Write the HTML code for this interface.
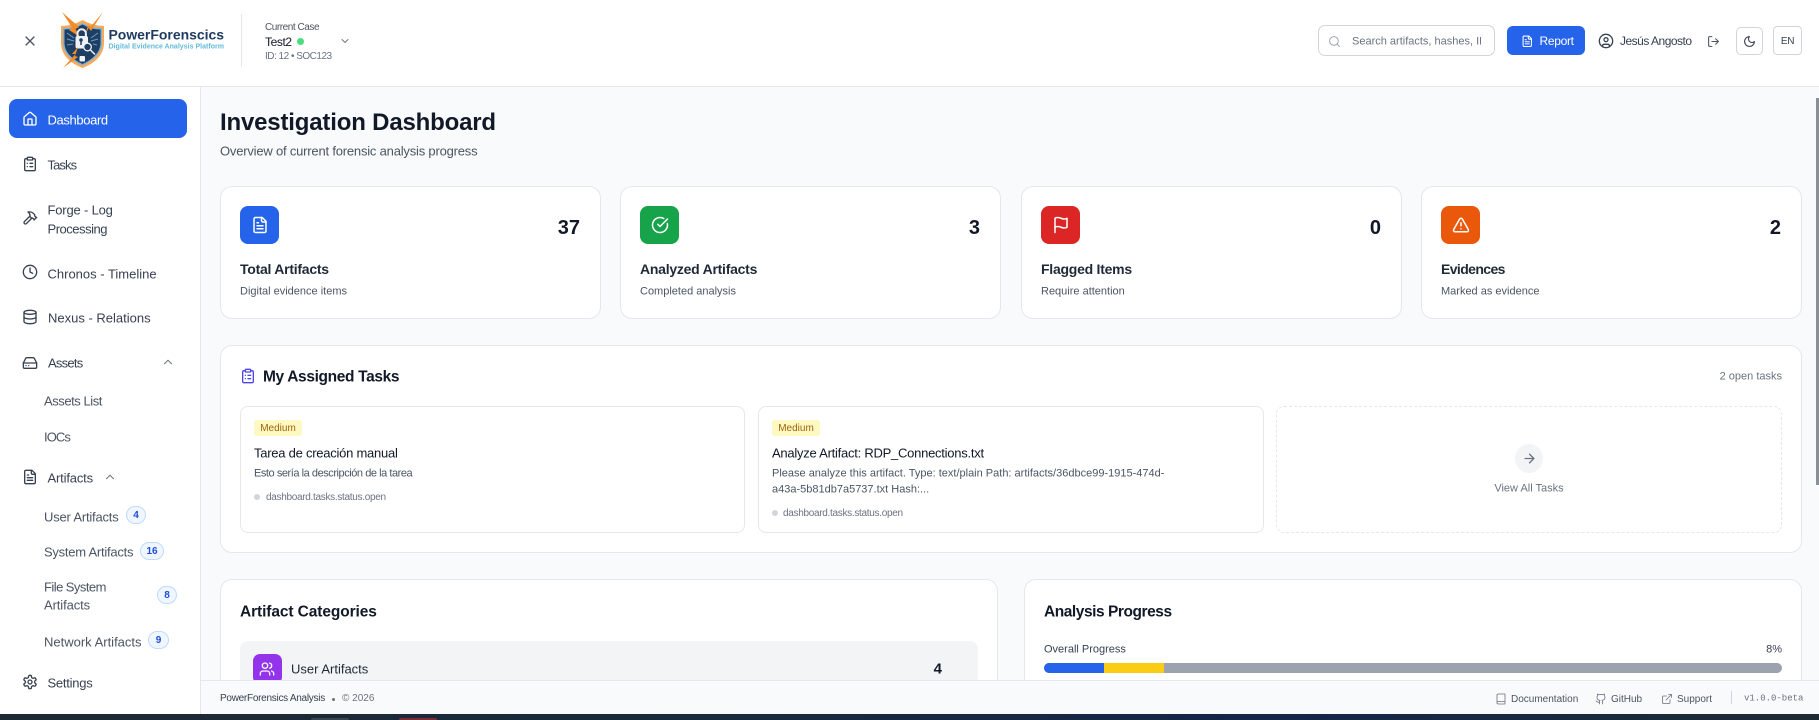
<!DOCTYPE html>
<html lang="en"><head><meta charset="utf-8"><title>PowerForensics</title>
<style>
*{box-sizing:border-box}
html,body{margin:0;padding:0;width:1819px;height:720px;overflow:hidden;background:#f9fafb;font-family:"Liberation Sans",sans-serif;color:#111827}
.b{position:absolute}
.t{position:absolute;white-space:nowrap;line-height:1;transform:translateY(-50%)}
.r{transform:translate(-100%,-50%)}
.c{transform:translate(-50%,-50%)}
svg.i{position:absolute;fill:none;stroke:currentColor;stroke-width:2;stroke-linecap:round;stroke-linejoin:round}
.card{position:absolute;background:#fff;border:1px solid #e5e7eb;border-radius:12px}
.nav{font-size:13px;color:#374151}
.ni{color:#374151}
.sub{font-size:13px;color:#4b5563}
.cnt{position:absolute;background:#eff6ff;border:1px solid #bfdbfe;border-radius:10px;color:#1d4ed8;font-size:10px;font-weight:bold;display:flex;align-items:center;justify-content:center;height:18px}
.ico{position:absolute;border-radius:8px;width:39px;height:38px}
.num{font-size:20px;font-weight:bold;color:#111827}
.st{font-size:14px;font-weight:bold;color:#1f2937;letter-spacing:-.25px}
.sd{font-size:11px;color:#4b5563}
.h{font-size:15.5px;font-weight:bold;color:#111827}
.badge{position:absolute;background:#fef9c3;border-radius:3px;color:#a16207;font-size:10px;display:flex;align-items:center;justify-content:center;width:48px;height:16px}
.tt{font-size:13px;color:#111827;letter-spacing:-.25px}
.td{font-size:11px;color:#4b5563}
.dot{position:absolute;width:6px;height:6px;border-radius:50%;background:#d1d5db}
.ts{font-size:10px;color:#6b7280;letter-spacing:-.3px}
.fl{font-size:10px;color:#4b5563}
</style></head><body>
<svg width="0" height="0" style="position:absolute"><defs>
<symbol id="home" viewBox="0 0 24 24"><path d="M15 21v-8a1 1 0 0 0-1-1h-4a1 1 0 0 0-1 1v8"/><path d="M3 10a2 2 0 0 1 .709-1.528l7-5.999a2 2 0 0 1 2.582 0l7 5.999A2 2 0 0 1 21 10v9a2 2 0 0 1-2 2H5a2 2 0 0 1-2-2z"/></symbol>
<symbol id="clip" viewBox="0 0 24 24"><rect x="8" y="2" width="8" height="4" rx="1"/><path d="M16 4h2a2 2 0 0 1 2 2v14a2 2 0 0 1-2 2H6a2 2 0 0 1-2-2V6a2 2 0 0 1 2-2h2"/><path d="M12 11h4M12 16h4M8 11h.01M8 16h.01"/></symbol>
<symbol id="hammer" viewBox="0 0 24 24"><path d="m15 12-8.373 8.373a1 1 0 1 1-3-3L12 9"/><path d="m18 15 4-4"/><path d="m21.5 11.5-1.914-1.914A2 2 0 0 1 19 8.172V7l-2.26-2.26a6 6 0 0 0-4.202-1.756L9 2.96l.92.82A6.18 6.18 0 0 1 12 8.4V10l2 2h1.172a2 2 0 0 1 1.414.586L18.5 14.5"/></symbol>
<symbol id="clock" viewBox="0 0 24 24"><circle cx="12" cy="12" r="10"/><polyline points="12 6 12 12 16 14"/></symbol>
<symbol id="db" viewBox="0 0 24 24"><ellipse cx="12" cy="5" rx="9" ry="3"/><path d="M3 5V19A9 3 0 0 0 21 19V5"/><path d="M3 12A9 3 0 0 0 21 12"/></symbol>
<symbol id="hd" viewBox="0 0 24 24"><line x1="22" y1="12" x2="2" y2="12"/><path d="M5.45 5.11 2 12v6a2 2 0 0 0 2 2h16a2 2 0 0 0 2-2v-6l-3.45-6.89A2 2 0 0 0 16.76 4H7.24a2 2 0 0 0-1.79 1.11z"/><path d="M6 16h.01M10 16h.01"/></symbol>
<symbol id="file" viewBox="0 0 24 24"><path d="M15 2H6a2 2 0 0 0-2 2v16a2 2 0 0 0 2 2h12a2 2 0 0 0 2-2V7Z"/><path d="M14 2v4a2 2 0 0 0 2 2h4"/><path d="M10 9H8M16 13H8M16 17H8"/></symbol>
<symbol id="gear" viewBox="0 0 24 24"><path d="M12.22 2h-.44a2 2 0 0 0-2 2v.18a2 2 0 0 1-1 1.73l-.43.25a2 2 0 0 1-2 0l-.15-.08a2 2 0 0 0-2.73.73l-.22.38a2 2 0 0 0 .73 2.73l.15.1a2 2 0 0 1 1 1.72v.51a2 2 0 0 1-1 1.74l-.15.09a2 2 0 0 0-.73 2.73l.22.38a2 2 0 0 0 2.73.73l.15-.08a2 2 0 0 1 2 0l.43.25a2 2 0 0 1 1 1.73V20a2 2 0 0 0 2 2h.44a2 2 0 0 0 2-2v-.18a2 2 0 0 1 1-1.73l.43-.25a2 2 0 0 1 2 0l.15.08a2 2 0 0 0 2.73-.73l.22-.39a2 2 0 0 0-.73-2.73l-.15-.08a2 2 0 0 1-1-1.74v-.5a2 2 0 0 1 1-1.74l.15-.09a2 2 0 0 0 .73-2.73l-.22-.38a2 2 0 0 0-2.73-.73l-.15.08a2 2 0 0 1-2 0l-.43-.25a2 2 0 0 1-1-1.73V4a2 2 0 0 0-2-2z"/><circle cx="12" cy="12" r="3"/></symbol>
<symbol id="check" viewBox="0 0 24 24"><path d="M21.801 10A10 10 0 1 1 17 3.335"/><path d="m9 11 3 3L22 4"/></symbol>
<symbol id="flag" viewBox="0 0 24 24"><path d="M4 15s1-1 4-1 5 2 8 2 4-1 4-1V3s-1 1-4 1-5-2-8-2-4 1-4 1z"/><line x1="4" y1="22" x2="4" y2="15"/></symbol>
<symbol id="warn" viewBox="0 0 24 24"><path d="m21.73 18-8-14a2 2 0 0 0-3.48 0l-8 14A2 2 0 0 0 4 21h16a2 2 0 0 0 1.73-3"/><path d="M12 9v4M12 17h.01"/></symbol>
<symbol id="users" viewBox="0 0 24 24"><path d="M16 21v-2a4 4 0 0 0-4-4H6a4 4 0 0 0-4 4v2"/><circle cx="9" cy="7" r="4"/><path d="M22 21v-2a4 4 0 0 0-3-3.87"/><path d="M16 3.13a4 4 0 0 1 0 7.75"/></symbol>
<symbol id="book" viewBox="0 0 24 24"><path d="M4 19.5v-15A2.5 2.5 0 0 1 6.5 2H20v20H6.5a2.5 2.5 0 0 1 0-5H20"/></symbol>
<symbol id="gh" viewBox="0 0 24 24"><path d="M15 22v-4a4.8 4.8 0 0 0-1-3.5c3 0 6-2 6-5.5.08-1.25-.27-2.48-1-3.5.28-1.15.28-2.35 0-3.5 0 0-1 0-3 1.5-2.64-.5-5.36-.5-8 0C6 2 5 2 5 2c-.3 1.15-.3 2.35 0 3.5A5.403 5.403 0 0 0 4 9c0 3.5 3 5.5 6 5.5-.39.49-.68 1.05-.85 1.65-.17.6-.22 1.23-.15 1.85v4"/><path d="M9 18c-4.51 2-5-2-7-2"/></symbol>
<symbol id="ext" viewBox="0 0 24 24"><path d="M15 3h6v6"/><path d="M10 14 21 3"/><path d="M18 13v6a2 2 0 0 1-2 2H5a2 2 0 0 1-2-2V8a2 2 0 0 1 2-2h6"/></symbol>
<symbol id="moon" viewBox="0 0 24 24"><path d="M12 3a6 6 0 0 0 9 9 9 9 0 1 1-9-9Z"/></symbol>
<symbol id="out" viewBox="0 0 24 24"><path d="M9 21H5a2 2 0 0 1-2-2V5a2 2 0 0 1 2-2h4"/><polyline points="16 17 21 12 16 7"/><line x1="21" y1="12" x2="9" y2="12"/></symbol>
<symbol id="user" viewBox="0 0 24 24"><circle cx="12" cy="12" r="10"/><circle cx="12" cy="10" r="3"/><path d="M7 20.662V19a2 2 0 0 1 2-2h6a2 2 0 0 1 2 2v1.662"/></symbol>
<symbol id="search" viewBox="0 0 24 24"><circle cx="11" cy="11" r="8"/><path d="m21 21-4.3-4.3"/></symbol>
<symbol id="x" viewBox="0 0 24 24"><path d="M18 6 6 18M6 6l12 12"/></symbol>
<symbol id="arrow" viewBox="0 0 24 24"><path d="M5 12h14M12 5l7 7-7 7"/></symbol>
<symbol id="down" viewBox="0 0 24 24"><path d="m6 9 6 6 6-6"/></symbol>
<symbol id="up" viewBox="0 0 24 24"><path d="m18 15-6-6-6 6"/></symbol>
</defs></svg>

<!-- main backgrounds -->
<div class="b" style="left:0;top:0;width:1819px;height:87px;background:#fff;border-bottom:1px solid #e5e7eb"></div>
<div class="b" style="left:0;top:87px;width:201px;height:627px;background:#fff;border-right:1px solid #e5e7eb"></div>

<!-- header -->
<svg class="i" style="left:22px;top:33px;color:#4b5563;stroke-width:2" width="16" height="16"><use href="#x"/></svg>
<svg class="b" style="left:58px;top:10px" width="170" height="60" viewBox="58 10 170 60">
<path d="M61 26 Q72 26 82.500 20 Q93 26 104 26 L104 44 Q103 60 82.500 68 Q62 60 61 44Z" fill="#f7a95c"/>
<path d="M63 28 Q74 28 82.500 23 Q91 28 102 28 L102 44 Q101 57 82.500 65.500 Q64 57 63 44Z" fill="#7fb2d0"/>
<path d="M64.500 29.500 Q74 29.500 82.500 24.500 Q91 29.500 100.500 29.500 L100.500 44 Q99.500 56 82.500 64 Q65.500 56 64.500 44Z" fill="#1e3f63"/>
<path d="M62 12 L79 27 L75.500 29 L80 37 L69 30 L72 27.500Z" fill="#f28c28"/>
<path d="M103 12 L91 31 L88.500 28 L85 36 L88 25 L91 26.500Z" fill="#f28c28"/>
<path d="M67 33 L74 38M67 39 L74 41M67 45 L73 44M98 33 L91 38M98 39 L91 41M97 45 L93 44" stroke="#6d9cc0" stroke-width="1" fill="none"/>
<path d="M77.500 37 V33.500 a4.200 4.200 0 0 1 8.400 0 V37" fill="none" stroke="#eef2f5" stroke-width="2"/>
<rect x="75.500" y="36" width="12.500" height="12.500" rx="2" fill="#eef2f5"/>
<circle cx="81" cy="40" r="1.800" fill="#1e3f63"/>
<path d="M81 41 v4" stroke="#1e3f63" stroke-width="1.500"/>
<circle cx="87.500" cy="47" r="3.800" fill="#1e3f63" stroke="#eef2f5" stroke-width="1.300"/>
<path d="M90.500 50 L95 54.500" stroke="#eef2f5" stroke-width="1.500"/>
<path d="M78 47 L72 54 L75.500 54 L63 68 L78 57 L75 56 Z" fill="#f28c28"/>
<rect x="79.500" y="56" width="5.500" height="5.500" rx="1" fill="#eef2f5"/>
<text x="108.500" y="39.500" font-family="Liberation Sans" font-weight="bold" font-size="13.500" fill="#1e3a5f" textLength="115.500" lengthAdjust="spacingAndGlyphs">PowerForenscics</text>
<text x="108.500" y="48.500" font-family="Liberation Sans" font-weight="bold" font-size="7.500" fill="#62bad8" textLength="115.500" lengthAdjust="spacingAndGlyphs">Digital Evidence Analysis Platform</text>
</svg>
<div class="b" style="left:241px;top:14px;width:1px;height:53px;background:#e5e7eb"></div>
<div class="t" style="left:265px;top:27.500px;font-size:10px;color:#4b5563;letter-spacing:-.45px">Current Case</div>
<div class="t" style="left:265px;top:42px;font-size:12px;font-weight:500;color:#111827;letter-spacing:-.4px">Test2</div>
<div class="b" style="left:297px;top:38px;width:7px;height:7px;border-radius:50%;background:#4ade80"></div>
<div class="t" style="left:265px;top:56.500px;font-size:10px;color:#6b7280;letter-spacing:-.5px">ID: 12 • SOC123</div>
<svg class="i" style="left:339px;top:35px;color:#6b7280;stroke-width:1.800" width="12" height="12"><use href="#down"/></svg>

<div class="b" style="left:1318px;top:25px;width:177px;height:31px;border:1px solid #d1d5db;border-radius:7px;background:#fff"></div>
<svg class="i" style="left:1327.500px;top:34.500px;color:#9ca3af;stroke-width:1.800" width="13" height="13"><use href="#search"/></svg>
<div class="b" style="left:1352px;top:30px;width:129px;height:22px;overflow:hidden"><div class="t" style="left:0;top:11.500px;font-size:11px;color:#6b7280">Search artifacts, hashes, IPs...</div></div>
<div class="b" style="left:1507px;top:26px;width:78px;height:29px;background:#2563eb;border-radius:6px"></div>
<svg class="i" style="left:1520.500px;top:34.500px;color:#fff" width="12.500" height="12.500"><use href="#file"/></svg>
<div class="t" style="left:1539.500px;top:41px;font-size:12px;color:#fff;letter-spacing:-.3px">Report</div>
<svg class="i" style="left:1598px;top:33px;color:#374151" width="16" height="16"><use href="#user"/></svg>
<div class="t" style="left:1620px;top:41px;font-size:12px;color:#374151;letter-spacing:-.5px">Jesús Angosto</div>
<svg class="i" style="left:1706.500px;top:34.500px;color:#4b5563" width="13" height="13"><use href="#out"/></svg>
<div class="b" style="left:1736px;top:27px;width:27px;height:28px;border:1px solid #d1d5db;border-radius:5px"></div>
<svg class="i" style="left:1743px;top:34.500px;color:#374151" width="13" height="13"><use href="#moon"/></svg>
<div class="b" style="left:1773px;top:26px;width:29px;height:29px;border:1px solid #d1d5db;border-radius:4px"></div>
<div class="t c" style="left:1787.500px;top:41.500px;font-size:10px;color:#374151;letter-spacing:-.3px">EN</div>

<!-- sidebar -->
<div class="b" style="left:9px;top:99px;width:178px;height:39px;background:#2563eb;border-radius:8px"></div>
<svg class="i" style="left:22px;top:111px;color:#fff" width="16" height="16"><use href="#home"/></svg>
<div class="t nav" style="left:47.500px;top:119.500px;color:#fff;letter-spacing:-.37px">Dashboard</div>
<svg class="i ni" style="left:22px;top:156px" width="16" height="16"><use href="#clip"/></svg>
<div class="t nav" style="left:47.500px;top:164.500px;letter-spacing:-.9px">Tasks</div>
<svg class="i ni" style="left:22px;top:210px" width="16" height="16"><use href="#hammer"/></svg>
<div class="t nav" style="left:47.500px;top:209.500px;letter-spacing:-.18px">Forge - Log</div>
<div class="t nav" style="left:47.500px;top:228.500px;letter-spacing:-.48px">Processing</div>
<svg class="i ni" style="left:22px;top:264px" width="16" height="16"><use href="#clock"/></svg>
<div class="t nav" style="left:47.500px;top:273.500px">Chronos - Timeline</div>
<svg class="i ni" style="left:22px;top:309px" width="16" height="16"><use href="#db"/></svg>
<div class="t nav" style="left:48px;top:317.500px">Nexus - Relations</div>
<svg class="i ni" style="left:22px;top:354.500px" width="16" height="16"><use href="#hd"/></svg>
<div class="t nav" style="left:48px;top:362.500px;letter-spacing:-.75px">Assets</div>
<svg class="i" style="left:161px;top:355px;color:#6b7280;stroke-width:1.800" width="14" height="14"><use href="#up"/></svg>
<div class="t sub" style="left:44px;top:401px;letter-spacing:-.45px">Assets List</div>
<div class="t sub" style="left:44px;top:436.500px;letter-spacing:-.9px">IOCs</div>
<svg class="i ni" style="left:22px;top:469px" width="16" height="16"><use href="#file"/></svg>
<div class="t nav" style="left:47.500px;top:477.500px;letter-spacing:-.17px">Artifacts</div>
<svg class="i" style="left:103px;top:470px;color:#6b7280;stroke-width:1.800" width="14" height="14"><use href="#up"/></svg>
<div class="t sub" style="left:44px;top:516.500px;letter-spacing:-.2px">User Artifacts</div>
<div class="cnt" style="left:126px;top:506px;width:20px">4</div>
<div class="t sub" style="left:44px;top:552px;letter-spacing:-.25px">System Artifacts</div>
<div class="cnt" style="left:140px;top:542px;width:24px">16</div>
<div class="t sub" style="left:44px;top:586.500px;letter-spacing:-.55px">File System</div>
<div class="t sub" style="left:44px;top:605px;letter-spacing:-.1px">Artifacts</div>
<div class="cnt" style="left:157px;top:586px;width:20px">8</div>
<div class="t sub" style="left:44px;top:641.500px">Network Artifacts</div>
<div class="cnt" style="left:148px;top:631px;width:21px">9</div>
<svg class="i ni" style="left:22px;top:674px" width="16" height="16"><use href="#gear"/></svg>
<div class="t nav" style="left:47.500px;top:683px;letter-spacing:-.25px">Settings</div>

<!-- page head -->
<div class="t" style="left:220px;top:122.500px;font-size:24px;font-weight:bold;color:#111827;letter-spacing:-.18px">Investigation Dashboard</div>
<div class="t" style="left:220px;top:151px;font-size:13px;color:#4b5563;letter-spacing:-.2px">Overview of current forensic analysis progress</div>

<!-- stat cards -->
<div class="card" style="left:220px;top:186px;width:381px;height:133px"></div>
<div class="ico" style="left:240px;top:206px;background:#2563eb"></div>
<svg class="i" style="left:250.500px;top:216px;color:#fff" width="18" height="18"><use href="#file"/></svg>
<div class="t num r" style="left:580px;top:227.500px">37</div>
<div class="t st" style="left:240px;top:269px">Total Artifacts</div>
<div class="t sd" style="left:240px;top:291.500px">Digital evidence items</div>

<div class="card" style="left:620px;top:186px;width:381px;height:133px"></div>
<div class="ico" style="left:640px;top:206px;background:#16a34a"></div>
<svg class="i" style="left:650.500px;top:216px;color:#fff" width="18" height="18"><use href="#check"/></svg>
<div class="t num r" style="left:980px;top:227.500px">3</div>
<div class="t st" style="left:640px;top:269px">Analyzed Artifacts</div>
<div class="t sd" style="left:640px;top:291.500px">Completed analysis</div>

<div class="card" style="left:1021px;top:186px;width:381px;height:133px"></div>
<div class="ico" style="left:1041px;top:206px;background:#dc2626"></div>
<svg class="i" style="left:1051.500px;top:216px;color:#fff" width="18" height="18"><use href="#flag"/></svg>
<div class="t num r" style="left:1381px;top:227.500px">0</div>
<div class="t st" style="left:1041px;top:269px">Flagged Items</div>
<div class="t sd" style="left:1041px;top:291.500px">Require attention</div>

<div class="card" style="left:1421px;top:186px;width:381px;height:133px"></div>
<div class="ico" style="left:1441px;top:206px;background:#ea580c"></div>
<svg class="i" style="left:1451.500px;top:216px;color:#fff" width="18" height="18"><use href="#warn"/></svg>
<div class="t num r" style="left:1781px;top:227.500px">2</div>
<div class="t st" style="left:1441px;top:269px;letter-spacing:-.6px">Evidences</div>
<div class="t sd" style="left:1441px;top:291.500px">Marked as evidence</div>

<!-- tasks -->
<div class="card" style="left:220px;top:345px;width:1582px;height:208px"></div>
<svg class="i" style="left:240px;top:368px;color:#4f46e5" width="16" height="16"><use href="#clip"/></svg>
<div class="t h" style="left:263px;top:377px;letter-spacing:-.35px">My Assigned Tasks</div>
<div class="t r" style="left:1782px;top:376.500px;font-size:11px;color:#6b7280">2 open tasks</div>

<div class="b" style="left:240px;top:406px;width:505px;height:127px;border:1px solid #e5e7eb;border-radius:8px;background:#fff"></div>
<div class="badge" style="left:254px;top:420px">Medium</div>
<div class="t tt" style="left:254px;top:453px">Tarea de creación manual</div>
<div class="t td" style="left:254px;top:473.500px;letter-spacing:-.45px">Esto sería la descripción de la tarea</div>
<div class="dot" style="left:254px;top:494px"></div>
<div class="t ts" style="left:266px;top:498px">dashboard.tasks.status.open</div>

<div class="b" style="left:758px;top:406px;width:506px;height:127px;border:1px solid #e5e7eb;border-radius:8px;background:#fff"></div>
<div class="badge" style="left:772px;top:420px">Medium</div>
<div class="t tt" style="left:772px;top:453px">Analyze Artifact: RDP_Connections.txt</div>
<div class="t td" style="left:772px;top:473.500px">Please analyze this artifact. Type: text/plain Path: artifacts/36dbce99-1915-474d-</div>
<div class="t td" style="left:772px;top:489.500px">a43a-5b81db7a5737.txt Hash:...</div>
<div class="dot" style="left:772px;top:510px"></div>
<div class="t ts" style="left:783px;top:514px">dashboard.tasks.status.open</div>

<div class="b" style="left:1276px;top:406px;width:506px;height:127px;border:1px dashed #e5e7eb;border-radius:8px"></div>
<div class="b" style="left:1515px;top:444px;width:28px;height:29px;border-radius:50%;background:#f3f4f6"></div>
<svg class="i" style="left:1521.500px;top:451px;color:#6b7280" width="15" height="15"><use href="#arrow"/></svg>
<div class="t c" style="left:1529px;top:488.500px;font-size:11px;color:#6b7280">View All Tasks</div>

<!-- bottom cards -->
<div class="card" style="left:220px;top:579px;width:778px;height:130px"></div>
<div class="t h" style="left:240px;top:612px;letter-spacing:-.1px">Artifact Categories</div>
<div class="b" style="left:240px;top:641px;width:738px;height:60px;background:#f3f4f6;border-radius:8px"></div>
<div class="b" style="left:253px;top:654px;width:29px;height:30px;background:#9333ea;border-radius:7px"></div>
<svg class="i" style="left:259px;top:661px;color:#fff" width="16" height="16"><use href="#users"/></svg>
<div class="t" style="left:291px;top:668.500px;font-size:13px;color:#1f2937">User Artifacts</div>
<div class="t r" style="left:942px;top:669px;font-size:15px;font-weight:bold;color:#111827">4</div>

<div class="card" style="left:1024px;top:579px;width:778px;height:130px"></div>
<div class="t h" style="left:1044px;top:612px;letter-spacing:-.45px">Analysis Progress</div>
<div class="t" style="left:1044px;top:649.500px;font-size:11px;color:#374151">Overall Progress</div>
<div class="t r" style="left:1782px;top:649.500px;font-size:11px;color:#374151">8%</div>
<div class="b" style="left:1044px;top:663px;width:738px;height:10px;border-radius:5px;background:#9ca3af;overflow:hidden">
<div class="b" style="left:0;top:0;width:60px;height:10px;background:#2563eb"></div>
<div class="b" style="left:60px;top:0;width:60px;height:10px;background:#facc15"></div>
</div>

<!-- scrollbar -->
<div class="b" style="left:1816px;top:98px;width:3px;height:387px;background:#8b8f96"></div>

<!-- footer -->
<div class="b" style="left:201px;top:680px;width:1618px;height:34px;background:#f9fafb;border-top:1px solid #e5e7eb"></div>
<div class="t" style="left:220px;top:699px;font-size:10px;font-weight:500;color:#374151;letter-spacing:-.27px">PowerForensics Analysis</div>
<div class="b" style="left:332px;top:698px;width:3px;height:3px;border-radius:50%;background:#6b7280"></div>
<div class="t" style="left:342px;top:699px;font-size:10px;color:#6b7280">© 2026</div>
<svg class="i" style="left:1494.500px;top:692.500px;color:#6b7280;stroke-width:1.600" width="12" height="12"><use href="#book"/></svg>
<div class="t fl" style="left:1511px;top:699.500px">Documentation</div>
<svg class="i" style="left:1594.500px;top:692.500px;color:#6b7280;stroke-width:1.600" width="12" height="12"><use href="#gh"/></svg>
<div class="t fl" style="left:1611px;top:699.500px">GitHub</div>
<svg class="i" style="left:1661px;top:692.500px;color:#6b7280;stroke-width:1.600" width="12" height="12"><use href="#ext"/></svg>
<div class="t fl" style="left:1677px;top:699.500px">Support</div>
<div class="b" style="left:1731px;top:691px;width:1px;height:13px;background:#d1d5db"></div>
<div class="t" style="left:1744px;top:698.500px;font-size:9px;font-family:'Liberation Mono',monospace;color:#6b7280">v1.0.0-beta</div>

<!-- desktop strip -->
<div class="b" style="left:0;top:714px;width:1819px;height:6px;background:linear-gradient(90deg,#1c2a33,#17293f 45%,#14264a 70%,#1b2b35)"></div>
<div class="b" style="left:311px;top:718px;width:38px;height:2px;background:#3a4650;border-radius:2px 2px 0 0"></div>
<div class="b" style="left:399px;top:718px;width:38px;height:2px;background:#7a2f36;border-radius:2px 2px 0 0"></div>
</body></html>
